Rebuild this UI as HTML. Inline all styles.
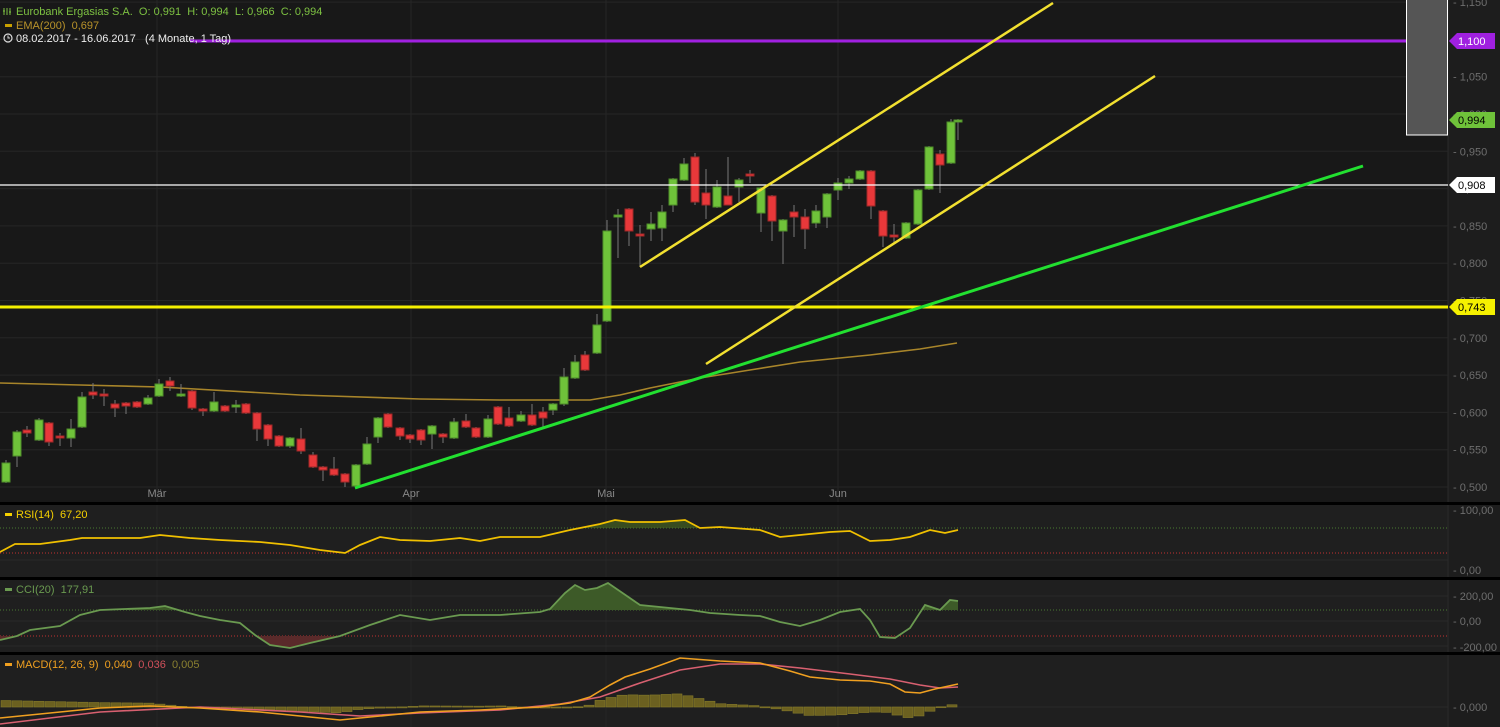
<!DOCTYPE html>
<html><head><meta charset="utf-8"><style>
html,body{margin:0;padding:0;background:#1a1a1a;width:1500px;height:727px;overflow:hidden;font-family:"Liberation Sans",sans-serif}
svg{display:block}
text{white-space:pre}
</style></head><body>
<svg id="s" width="1500" height="727" xmlns="http://www.w3.org/2000/svg" font-family="Liberation Sans, sans-serif">
<rect x="0" y="0" width="1500" height="727" fill="#181818"/>
<rect x="1448" y="0" width="52" height="727" fill="#1d1d1d"/>
<rect x="0" y="505" width="1448" height="72" fill="#1f1f1f"/>
<rect x="0" y="580" width="1448" height="72" fill="#1f1f1f"/>
<rect x="0" y="655" width="1448" height="72" fill="#1f1f1f"/>
<line x1="1448" y1="0" x2="1448" y2="727" stroke="#2a2a2a"/>
<g id="grid"></g>
<g id="main"></g>
<rect x="0" y="502" width="1500" height="3" fill="#000"/>
<rect x="0" y="577" width="1500" height="3" fill="#000"/>
<rect x="0" y="652" width="1500" height="3" fill="#000"/>
<g id="ind"></g>
<g font-size="11">
<g stroke="#7dc142" stroke-width="1"><line x1="4" y1="8" x2="4" y2="15"/><line x1="7" y1="8" x2="7" y2="15"/><line x1="10" y1="8" x2="10" y2="15"/><line x1="3" y1="11" x2="5" y2="11"/><line x1="9" y1="12" x2="11" y2="12"/></g>
<text x="16" y="15" fill="#7dc142">Eurobank Ergasias S.A.  O: 0,991  H: 0,994  L: 0,966  C: 0,994</text>
<rect x="5" y="24" width="7" height="3" fill="#c8a000"/>
<text x="16" y="29" fill="#b8922a">EMA(200)  0,697</text>
<circle cx="8" cy="38" r="4" fill="none" stroke="#ddd" stroke-width="1.2"/>
<path d="M8 35.5V38H10" stroke="#ddd" fill="none"/>
<text x="16" y="42" fill="#eee">08.02.2017 - 16.06.2017   (4 Monate, 1 Tag)</text>
<rect x="5" y="513" width="7" height="3" fill="#f5d000"/>
<text x="16" y="518" fill="#f5d000">RSI(14)  67,20</text>
<rect x="5" y="588" width="7" height="3" fill="#6a9a50"/>
<text x="16" y="593" fill="#6a9a50">CCI(20)  177,91</text>
<rect x="5" y="663" width="7" height="3" fill="#f0a020"/>
<text x="16" y="668" fill="#f0a020">MACD(12, 26, 9)  0,040  <tspan fill="#d0505a">0,036</tspan>  <tspan fill="#8a8030">0,005</tspan></text>
</g>
</svg>
<script>
var NS="http://www.w3.org/2000/svg";
function el(p,t,a,txt){var e=document.createElementNS(NS,t);for(var k in a)e.setAttribute(k,a[k]);if(txt!==undefined)e.textContent=txt;p.appendChild(e);return e;}
var G=document.getElementById('grid'),M=document.getElementById('main'),I=document.getElementById('ind'),S=document.getElementById('s');
var labs=["0,500","0,550","0,600","0,650","0,700","0,750","0,800","0,850","0,900","0,950","1,000","1,050","1,100","1,150"];
for(var i=0;i<14;i++){var yy=487-i*37.3;el(G,'line',{x1:0,y1:yy,x2:1448,y2:yy,stroke:'#262626'});
el(G,'text',{x:1453,y:yy+4,fill:'#6e6e6e','font-size':11},"- "+labs[i]);}
[[157,"Mär"],[411,"Apr"],[606,"Mai"],[838,"Jun"]].forEach(function(m){el(G,'line',{x1:m[0],y1:0,x2:m[0],y2:727,stroke:'#262626'});
el(G,'text',{x:m[0],y:497,fill:'#888','font-size':11,'text-anchor':'middle'},m[1]);});
el(M,'polyline',{points:"0,383 80,385 160,387 300,395 420,399 500,400 590,400 620,395 650,388 700,378 750,370 800,362 870,355 920,349 957,343",fill:'none',stroke:'#a8852a','stroke-width':1.6});
var C=[[6,463,482,460,483,1],[17,432,456,430,467,1],[27,430,433,426,437,0],[39,420,440,418,441,1],[49,423,442,422,446,0],[60,436,438,433,446,0],[71,429,438,419,447,1],[82,397,427,392,428,1],[93,392,395,383,399,0],[104,394,396,389,406,0],[115,404,408,400,417,0],[126,403,406,402,414,0],[137,402,407,401,408,0],[148,398,404,395,405,1],[159,384,396,379,397,1],[170,381,386,377,391,0],[181,394,396,384,397,1],[192,391,408,390,410,0],[203,409,411,408,416,0],[214,402,411,392,412,1],[225,406,411,405,412,0],[236,405,406,400,413,1],[246,404,413,403,414,0],[257,413,429,412,441,0],[268,425,439,424,446,0],[279,436,446,435,447,0],[290,438,446,437,448,1],[301,439,451,428,454,0],[313,455,467,452,468,0],[323,467,470,466,481,0],[334,469,475,457,476,0],[345,474,482,473,487,0],[356,465,486,464,487,1],[367,444,464,437,465,1],[378,418,437,417,443,1],[388,414,427,413,428,0],[400,428,436,427,440,0],[410,435,439,434,443,0],[421,430,440,429,445,0],[432,426,434,425,449,1],[443,434,437,433,443,0],[454,422,438,418,439,1],[466,421,427,414,428,0],[476,428,437,427,438,0],[488,419,437,415,438,1],[498,407,424,406,425,0],[509,418,426,407,427,0],[521,415,421,411,422,1],[532,415,425,404,426,0],[543,412,418,407,427,0],[553,404,410,403,415,1],[564,377,404,368,406,1],[575,362,378,355,379,1],[585,355,370,351,371,0],[597,325,353,314,354,1],[607,231,321,220,322,1],[618,215,217,209,258,1],[629,209,231,208,246,0],[640,234,236,225,267,0],[651,224,229,212,241,1],[662,212,228,205,241,1],[673,179,205,178,212,1],[684,164,180,158,181,1],[695,157,202,153,205,0],[706,193,205,169,219,0],[717,187,207,180,208,1],[728,196,205,157,205,0],[739,180,187,178,202,1],[750,174,176,170,183,0],[761,188,213,187,232,1],[772,196,221,195,241,0],[783,220,231,219,264,1],[794,212,217,205,237,0],[805,217,229,209,249,0],[816,211,223,205,228,1],[827,194,217,193,228,1],[838,183,190,178,200,1],[849,179,183,176,189,1],[860,171,179,170,180,1],[871,171,206,170,219,0],[883,211,236,210,247,0],[894,235,237,224,243,0],[906,223,238,222,239,1],[918,190,224,189,225,1],[929,147,189,146,190,1],[940,154,165,150,193,0],[951,122,163,119,164,1],[958,120,122,119,140,1]];
C.forEach(function(c){el(M,'line',{x1:c[0],y1:c[3],x2:c[0],y2:c[4],stroke:'#777','stroke-width':1});
var h=Math.max(2,c[2]-c[1]);el(M,'rect',{x:c[0]-4,y:c[1],width:8,height:h,fill:c[5]?'#6fc23a':'#e8383a',stroke:c[5]?'#4f8f2a':'#a02828','stroke-width':1});});
el(M,'line',{x1:0,y1:185,x2:1448,y2:185,stroke:'#fff','stroke-width':1.3});
el(M,'line',{x1:190,y1:41,x2:1448,y2:41,stroke:'#a020e0','stroke-width':3});
el(M,'line',{x1:0,y1:307,x2:1448,y2:307,stroke:'#f5f000','stroke-width':3});
el(M,'line',{x1:640,y1:267,x2:1053,y2:3,stroke:'#f2e030','stroke-width':2.5});
el(M,'line',{x1:706,y1:364,x2:1155,y2:76,stroke:'#f2e030','stroke-width':2.5});
el(M,'line',{x1:355,y1:488,x2:1363,y2:166,stroke:'#22e030','stroke-width':3});
el(M,'rect',{x:1406.5,y:-2,width:41,height:137,fill:'#555',stroke:'#fff','stroke-width':1});
function tag(y,txt,bg,fg){el(M,'path',{d:"M1449 "+y+" L1457 "+(y-8)+" H1495 V"+(y+8)+" H1457 Z",fill:bg});el(M,'text',{x:1458,y:y+4,fill:fg,'font-size':11},txt);}
tag(41,"1,100","#a020e0","#fff");tag(120,"0,994","#6fc23a","#000");tag(185,"0,908","#fff","#000");tag(307,"0,743","#f5f000","#000");
[[510,"- 100,00"],[570,"- 0,00"],[596,"- 200,00"],[621,"- 0,00"],[647,"- -200,00"],[707,"- 0,000"]].forEach(function(a){el(I,'text',{x:1453,y:a[0]+4,fill:'#6e6e6e','font-size':11},a[1]);});
el(I,'line',{x1:0,y1:528,x2:1448,y2:528,stroke:'#4a7a30','stroke-dasharray':'1,2'});
el(I,'line',{x1:0,y1:553,x2:1448,y2:553,stroke:'#c03030','stroke-dasharray':'1,2'});
el(I,'line',{x1:0,y1:610,x2:1448,y2:610,stroke:'#4a7a30','stroke-dasharray':'1,2'});
el(I,'line',{x1:0,y1:636,x2:1448,y2:636,stroke:'#c03030','stroke-dasharray':'1,2'});
[560,596,621,646,707].forEach(function(v){el(I,'line',{x1:0,y1:v,x2:1448,y2:v,stroke:'#2a2a2a'});});
var defs=el(S,'defs',{});var c1=el(defs,'clipPath',{id:'cg'});el(c1,'rect',{x:0,y:580,width:1448,height:30});
var c2=el(defs,'clipPath',{id:'cr'});el(c2,'rect',{x:0,y:636,width:1448,height:16});
var c3=el(defs,'clipPath',{id:'cr1'});el(c3,'rect',{x:0,y:505,width:1448,height:23});
var rsi="0,552 15,544 40,544 70,540 82,538 140,538 160,535 190,538 220,540 260,542 290,545 320,550 345,553 360,545 380,537 400,540 430,541 460,538 480,541 500,537 540,537 570,530 600,524 615,520 630,522 660,522 685,520 700,528 720,527 760,530 780,537 800,535 830,532 850,531 870,541 890,540 910,537 930,530 945,533 958,530";
el(I,'polygon',{points:"0,528 "+rsi+" 958,528",fill:'#4a6a20','fill-opacity':0.6,'clip-path':'url(#cr1)'});
el(I,'polyline',{points:rsi,fill:'none',stroke:'#f0c000','stroke-width':1.8});
var cci="0,640 17,636 30,630 60,626 80,615 100,610 150,608 165,606 185,612 200,616 220,620 240,623 255,635 270,645 290,648 310,643 340,636 370,625 400,615 430,620 460,615 500,615 540,612 550,609 565,593 575,585 585,590 597,588 608,583 640,605 660,607 690,610 710,613 740,615 760,616 780,622 800,626 820,620 840,612 860,609 870,620 880,637 895,638 910,628 925,605 940,610 950,600 958,601";
el(I,'polygon',{points:"0,610 "+cci+" 958,610",fill:'#3d5a28','clip-path':'url(#cg)'});
el(I,'polygon',{points:"0,636 "+cci+" 958,636",fill:'#5a2a2a','clip-path':'url(#cr)'});
el(I,'polyline',{points:cci,fill:'none',stroke:'#6a9a50','stroke-width':1.8});
function parse(s){return s.split(' ').map(function(p){return p.split(',').map(Number);});}
function interp(a,x){for(var i=1;i<a.length;i++){if(x<=a[i][0]){var t=(x-a[i-1][0])/(a[i][0]-a[i-1][0]);return a[i-1][1]+t*(a[i][1]-a[i-1][1]);}}return a[a.length-1][1];}
var macd="0,718 50,713 100,708 150,706 200,708 260,712 300,716 340,720 380,716 420,712 480,710 540,707 570,703 590,697 610,685 625,677 650,669 680,658 720,661 760,663 790,671 810,677 840,680 870,681 890,684 905,692 920,693 935,689 958,684";
var sig="0,724 100,712 200,707 300,712 360,716 420,713 500,710 560,704 600,697 640,683 680,670 720,664 760,664 800,668 850,674 890,679 920,685 940,688 958,687";
var ma=parse(macd),sa=parse(sig);
for(var bx=6;bx<=962;bx+=11){var d=interp(sa,bx)-interp(ma,bx);var hv=d*1.1;var ty=hv>0?707-hv:707,hh=Math.abs(hv);
el(I,'rect',{x:bx-5,y:ty,width:10,height:Math.max(1,hh),fill:'#6b6020',stroke:'#857a2a','stroke-width':0.6});}
el(I,'polyline',{points:sig,fill:'none',stroke:'#d86070','stroke-width':1.6});
el(I,'polyline',{points:macd,fill:'none',stroke:'#f0a020','stroke-width':1.6});
</script>
</body></html>
